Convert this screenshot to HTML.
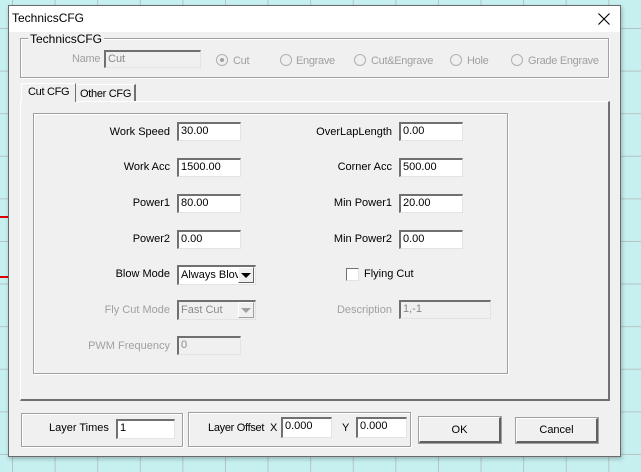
<!DOCTYPE html>
<html><head><style>
*{box-sizing:border-box;margin:0;padding:0}
body{width:641px;height:472px;overflow:hidden;position:relative;font-family:"Liberation Sans",sans-serif;font-size:11px;color:#000;
background-color:#c6f0f0;
background-image:linear-gradient(to right,#b4c4c4 1px,transparent 1px),linear-gradient(to bottom,#b4c4c4 1px,transparent 1px);
background-size:42.6px 42.6px;background-position:12px 28px;}
.a{position:absolute}
.dlg{left:8px;top:5px;width:613px;height:452px;background:#f0f0f0;border:1px solid #6b6b6b;box-shadow:1px 2px 4px rgba(0,0,0,.25)}
.title{left:0;top:0;width:611px;height:26px;background:#fff}
.t{white-space:nowrap;line-height:13px}
.g{color:#a0a0a0}
.n{letter-spacing:-0.3px}
.inp{background:#fff;border-top:2px solid #707070;border-left:2px solid #707070;border-right:1px solid #e3e3e3;border-bottom:1px solid #e3e3e3;padding-left:2px;line-height:15px;white-space:nowrap;overflow:hidden}
.dis{background:#f0f0f0;color:#8a8a8a}
.grp{border:1px solid #a0a0a0;box-shadow:inset 1px 1px 0 #fff,1px 1px 0 #fff}
.rad{width:12px;height:12px;border-radius:50%;border:1px solid #b0b0b0;background:#f0f0f0}
.btn{background:#f0f0f0;border:1px solid #fff;border-right:2px solid #606060;border-bottom:2px solid #606060;outline:1px solid #a0a0a0;text-align:center}
.r{text-align:right}
</style></head><body>
<div class="a" style="left:0;top:216px;width:8px;height:2px;background:#d00"></div>
<div class="a" style="left:0;top:276px;width:8px;height:2px;background:#d00"></div>
<div class="a dlg">
<div class="a title"></div>
</div>
<div class="a t" style="left:12px;top:12px;font-size:12px">TechnicsCFG</div>
<svg class="a" style="left:598px;top:13px" width="12" height="12"><path d="M0.5 0.5L11.5 11.5M11.5 0.5L0.5 11.5" stroke="#000" stroke-width="1.1" fill="none"/></svg>

<div class="a grp" style="left:20px;top:38px;width:589px;height:40px"></div>
<div class="a t" style="left:28px;top:33px;background:#f0f0f0;padding:0 2px;font-size:12px">TechnicsCFG</div>
<div class="a t g n" style="left:72px;top:53px">Name</div>
<div class="a inp dis" style="left:104px;top:50px;width:97px;height:18px">Cut</div>
<div class="a rad" style="left:216px;top:54px"></div><div class="a" style="left:220px;top:58px;width:4px;height:4px;border-radius:50%;background:#a0a0a0"></div>
<div class="a t g n" style="left:233px;top:55px">Cut</div>
<div class="a rad" style="left:280px;top:54px"></div><div class="a t g n" style="left:296px;top:55px">Engrave</div>
<div class="a rad" style="left:354px;top:54px"></div><div class="a t g n" style="left:371px;top:55px">Cut&amp;Engrave</div>
<div class="a rad" style="left:450px;top:54px"></div><div class="a t g n" style="left:467px;top:55px">Hole</div>
<div class="a rad" style="left:511px;top:54px"></div><div class="a t g n" style="left:528px;top:55px">Grade Engrave</div>

<div class="a" style="left:20px;top:101px;width:590px;height:300px;border:1px solid #fff;border-right:2px solid #707070;border-bottom:2px solid #707070"></div>
<div class="a" style="left:21px;top:83px;width:55px;height:19px;background:#f0f0f0;border:1px solid #fff;border-bottom:none;border-right:1px solid #707070"></div>
<div class="a t n" style="left:28px;top:86px;font-size:11px">Cut CFG</div>
<div class="a" style="left:76px;top:84px;width:60px;height:17px;border-top:1px solid #fff;border-right:2px solid #707070"></div>
<div class="a t n" style="left:80px;top:88px;font-size:11px">Other CFG</div>

<div class="a grp" style="left:33px;top:113px;width:475px;height:261px"></div>

<div class="a t r" style="left:60px;top:126px;width:110px">Work Speed</div>
<div class="a inp" style="left:177px;top:122px;width:64px;height:19px">30.00</div>
<div class="a t r" style="left:60px;top:161px;width:110px">Work Acc</div>
<div class="a inp" style="left:177px;top:158px;width:64px;height:19px">1500.00</div>
<div class="a t r" style="left:60px;top:197px;width:110px">Power1</div>
<div class="a inp" style="left:177px;top:194px;width:64px;height:19px">80.00</div>
<div class="a t r" style="left:60px;top:233px;width:110px">Power2</div>
<div class="a inp" style="left:177px;top:230px;width:64px;height:19px">0.00</div>
<div class="a t r" style="left:60px;top:268px;width:110px">Blow Mode</div>
<div class="a inp" style="left:177px;top:265px;width:79px;height:20px;line-height:16px">Always Blov</div>
<div class="a" style="left:238px;top:267px;width:16px;height:16px;background:#f0f0f0;border:1px solid #fff;border-right:1px solid #606060;border-bottom:1px solid #606060"></div>
<div class="a" style="left:241px;top:273px;width:0;height:0;border-left:5px solid transparent;border-right:5px solid transparent;border-top:5px solid #000"></div>
<div class="a t r g" style="left:60px;top:304px;width:110px">Fly Cut Mode</div>
<div class="a inp dis" style="left:177px;top:300px;width:79px;height:20px;line-height:16px">Fast Cut</div>
<div class="a" style="left:238px;top:302px;width:16px;height:16px;background:#f0f0f0;border:1px solid #fff;border-right:1px solid #a0a0a0;border-bottom:1px solid #a0a0a0"></div>
<div class="a" style="left:241px;top:308px;width:0;height:0;border-left:5px solid transparent;border-right:5px solid transparent;border-top:5px solid #a0a0a0"></div>
<div class="a t r g" style="left:60px;top:340px;width:110px">PWM Frequency</div>
<div class="a inp dis" style="left:177px;top:336px;width:64px;height:19px">0</div>

<div class="a t r" style="left:280px;top:126px;width:112px">OverLapLength</div>
<div class="a inp" style="left:399px;top:122px;width:64px;height:19px">0.00</div>
<div class="a t r" style="left:280px;top:161px;width:112px">Corner Acc</div>
<div class="a inp" style="left:399px;top:158px;width:64px;height:19px">500.00</div>
<div class="a t r" style="left:280px;top:197px;width:112px">Min Power1</div>
<div class="a inp" style="left:399px;top:194px;width:64px;height:19px">20.00</div>
<div class="a t r" style="left:280px;top:233px;width:112px">Min Power2</div>
<div class="a inp" style="left:399px;top:230px;width:64px;height:19px">0.00</div>
<div class="a" style="left:346px;top:268px;width:13px;height:13px;background:#fff;border-top:1px solid #707070;border-left:1px solid #707070;border-right:1px solid #e3e3e3;border-bottom:1px solid #e3e3e3"></div>
<div class="a t" style="left:364px;top:268px">Flying Cut</div>
<div class="a t r g" style="left:280px;top:304px;width:112px">Description</div>
<div class="a inp dis" style="left:399px;top:300px;width:92px;height:19px">1,-1</div>

<div class="a grp" style="left:21px;top:413px;width:162px;height:34px"></div>
<div class="a t" style="left:49px;top:422px">Layer Times</div>
<div class="a inp" style="left:116px;top:419px;width:59px;height:20px">1</div>
<div class="a grp" style="left:188px;top:412px;width:223px;height:35px"></div>
<div class="a t n" style="left:208px;top:422px">Layer Offset</div>
<div class="a t" style="left:270px;top:422px">X</div>
<div class="a inp" style="left:281px;top:417px;width:51px;height:21px">0.000</div>
<div class="a t" style="left:342px;top:422px">Y</div>
<div class="a inp" style="left:356px;top:417px;width:51px;height:21px">0.000</div>
<div class="a btn t" style="left:419px;top:417px;width:82px;height:26px;line-height:24px">OK</div>
<div class="a btn t" style="left:516px;top:418px;width:82px;height:25px;line-height:23px">Cancel</div>
</body></html>
